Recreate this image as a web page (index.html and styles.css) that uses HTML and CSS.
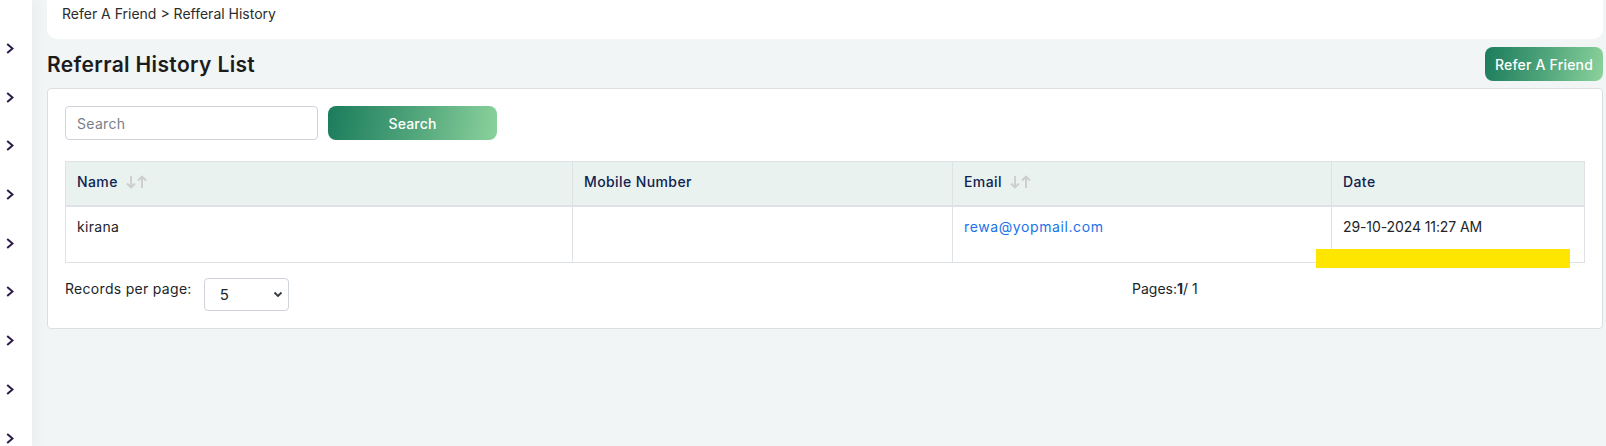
FILE: index.html
```html
<!DOCTYPE html>
<html lang="en">
<head>
    <meta charset="UTF-8">
    <meta name="viewport" content="width=device-width, initial-scale=1.0">
    <title>Referral History</title>
    <link rel="stylesheet" href="styles.css">
</head>
<body>
    <div class="layout">
        <aside class="sidebar">
            <span class="nav-toggle"><svg width="8" height="11" viewBox="0 0 8 11"><path d="M1.2 1 L6.5 5.5 L1.2 10"/></svg></span>
            <span class="nav-toggle"><svg width="8" height="11" viewBox="0 0 8 11"><path d="M1.2 1 L6.5 5.5 L1.2 10"/></svg></span>
            <span class="nav-toggle"><svg width="8" height="11" viewBox="0 0 8 11"><path d="M1.2 1 L6.5 5.5 L1.2 10"/></svg></span>
            <span class="nav-toggle"><svg width="8" height="11" viewBox="0 0 8 11"><path d="M1.2 1 L6.5 5.5 L1.2 10"/></svg></span>
            <span class="nav-toggle"><svg width="8" height="11" viewBox="0 0 8 11"><path d="M1.2 1 L6.5 5.5 L1.2 10"/></svg></span>
            <span class="nav-toggle"><svg width="8" height="11" viewBox="0 0 8 11"><path d="M1.2 1 L6.5 5.5 L1.2 10"/></svg></span>
            <span class="nav-toggle"><svg width="8" height="11" viewBox="0 0 8 11"><path d="M1.2 1 L6.5 5.5 L1.2 10"/></svg></span>
            <span class="nav-toggle"><svg width="8" height="11" viewBox="0 0 8 11"><path d="M1.2 1 L6.5 5.5 L1.2 10"/></svg></span>
            <span class="nav-toggle"><svg width="8" height="11" viewBox="0 0 8 11"><path d="M1.2 1 L6.5 5.5 L1.2 10"/></svg></span>
        </aside>

        <main class="page">
            <div class="breadcrumb">Refer A Friend &gt; Refferal History</div>

            <div class="title-row">
                <h1 class="page-title">Referral History List</h1>
                <button class="btn-gradient btn-refer">Refer A Friend</button>
            </div>

            <div class="card">
                <div class="search-row">
                    <input type="text" class="search-input" placeholder="Search">
                    <button class="btn-gradient btn-search">Search</button>
                </div>

                <table class="data-table">
                    <colgroup>
                        <col style="width: 507px">
                        <col style="width: 380px">
                        <col style="width: 379px">
                        <col>
                    </colgroup>
                    <thead>
                        <tr>
                            <th>Name <svg class="sort-icon" width="23" height="14" viewBox="0 0 23 14"><path d="M6 1 V12.5 M2 8.5 L6 12.5 L10 8.5 M17 13 V1.5 M13 5.5 L17 1.5 L21 5.5"/></svg></th>
                            <th>Mobile Number</th>
                            <th>Email <svg class="sort-icon" width="23" height="14" viewBox="0 0 23 14"><path d="M6 1 V12.5 M2 8.5 L6 12.5 L10 8.5 M17 13 V1.5 M13 5.5 L17 1.5 L21 5.5"/></svg></th>
                            <th>Date</th>
                        </tr>
                    </thead>
                    <tbody>
                        <tr>
                            <td>kirana</td>
                            <td></td>
                            <td><a href="#" class="email-link">rewa@yopmail.com</a></td>
                            <td class="date-cell">29-10-2024 11:27 AM</td>
                        </tr>
                    </tbody>
                </table>

                <div class="table-footer">
                    <div class="per-page">
                        <label for="perPage">Records per page:</label>
                        <span class="select-wrap">
                            <select id="perPage" class="per-page-select">
                                <option>5</option>
                                <option>10</option>
                                <option>25</option>
                            </select>
                            <svg class="select-caret" width="10" height="7" viewBox="0 0 10 7"><path d="M1.5 1.5 L5 5 L8.5 1.5"/></svg>
                        </span>
                    </div>
                    <div class="pager">Pages:<b>1</b>/ 1</div>
                </div>

                <div class="marker"></div>
            </div>
        </main>
    </div>
</body>
</html>
```

FILE: styles.css
```css
* {
    margin: 0;
    padding: 0;
    box-sizing: border-box;
}

body {
    font-family: Inter, 'Open Sans', sans-serif;
    font-size: 14px;
    color: #212529;
    background: #f1f5f5;
}

.layout {
    display: flex;
    height: 100vh;
    overflow: hidden;
}

.sidebar {
    width: 32px;
    flex-shrink: 0;
    background: #fff;
    display: flex;
    flex-direction: column;
    align-items: flex-start;
    padding: 43px 0 0 6px;
    gap: 37.7px;
    box-shadow: 4px 0 14px rgba(0, 0, 0, 0.035);
    z-index: 1;
}

.nav-toggle svg {
    display: block;
    fill: none;
    stroke: #2b1b4b;
    stroke-width: 2;
}

.page {
    flex: 1;
    padding: 0 3px 0 15px;
}

.breadcrumb {
    height: 39px;
    background: #fff;
    border-radius: 0 0 10px 10px;
    padding: 4px 15px 0;
    line-height: 20px;
    color: #2c2c2c;
}

.title-row {
    display: flex;
    justify-content: space-between;
    align-items: center;
    margin-top: 8px;
}

.page-title {
    font-size: 21px;
    font-weight: 600;
    color: #1c1c1c;
    letter-spacing: 0.35px;
}

.btn-gradient {
    border: none;
    color: #fff;
    font-family: inherit;
    font-size: 14px;
    font-weight: 500;
    letter-spacing: 0.2px;
    background: linear-gradient(100deg, #1b7c5c 0%, #4fa47a 50%, #8bd29c 100%);
    cursor: pointer;
}

.btn-refer {
    width: 118px;
    height: 34px;
    border-radius: 8px;
}

.card {
    position: relative;
    margin-top: 7px;
    background: #fff;
    border: 1px solid #dcdfe1;
    border-radius: 4px;
    padding: 17px;
}

.search-row {
    display: flex;
    gap: 10px;
}

.search-input {
    width: 253px;
    height: 34px;
    border: 1px solid #ced4da;
    border-radius: 4px;
    padding: 0 11px;
    font-family: inherit;
    font-size: 14px;
    letter-spacing: 0.3px;
    color: #212529;
}

.search-input::placeholder {
    color: #7a7f86;
}

.btn-search {
    width: 169px;
    height: 34px;
    border-radius: 8px;
}

.data-table {
    width: 100%;
    margin-top: 21px;
    border-collapse: collapse;
    table-layout: fixed;
}

.data-table th,
.data-table td {
    border: 1px solid #dee2e6;
    text-align: left;
    vertical-align: top;
    line-height: 20px;
}

.data-table th {
    background: #e9f2ef;
    color: #0f2250;
    font-weight: 500;
    letter-spacing: 0.4px;
    padding: 10px 11px 13px;
    border-bottom-width: 2px;
}

.data-table td {
    height: 56px;
    padding: 10px 11px 0;
    letter-spacing: 0.3px;
}

.data-table td.date-cell {
    letter-spacing: -0.1px;
}

.sort-icon {
    vertical-align: -2px;
    margin-left: 3px;
    fill: none;
    stroke: #cdcdcd;
    stroke-width: 1.9;
}

.email-link {
    color: #1a73e8;
    text-decoration: none;
    letter-spacing: 0.6px;
}

.table-footer {
    display: flex;
    align-items: flex-start;
    margin-top: 15px;
}

.per-page {
    display: flex;
    align-items: flex-start;
    gap: 12px;
    line-height: 21px;
    letter-spacing: 0.3px;
}

.select-wrap {
    position: relative;
    display: inline-block;
}

.per-page-select {
    appearance: none;
    width: 85px;
    height: 33px;
    border: 1px solid #ced4da;
    border-radius: 4px;
    background: #fff;
    padding: 0 15px;
    font-family: inherit;
    font-size: 15px;
    color: #212529;
}

.select-caret {
    position: absolute;
    right: 6px;
    top: 13px;
    fill: none;
    stroke: #343a40;
    stroke-width: 1.8;
    pointer-events: none;
}

.pager {
    margin-left: auto;
    width: 453px;
    line-height: 21px;
}

.pager b {
    font-weight: 700;
}

.marker {
    position: absolute;
    left: 1268px;
    top: 160px;
    width: 254px;
    height: 19px;
    background: #ffe600;
}
```
